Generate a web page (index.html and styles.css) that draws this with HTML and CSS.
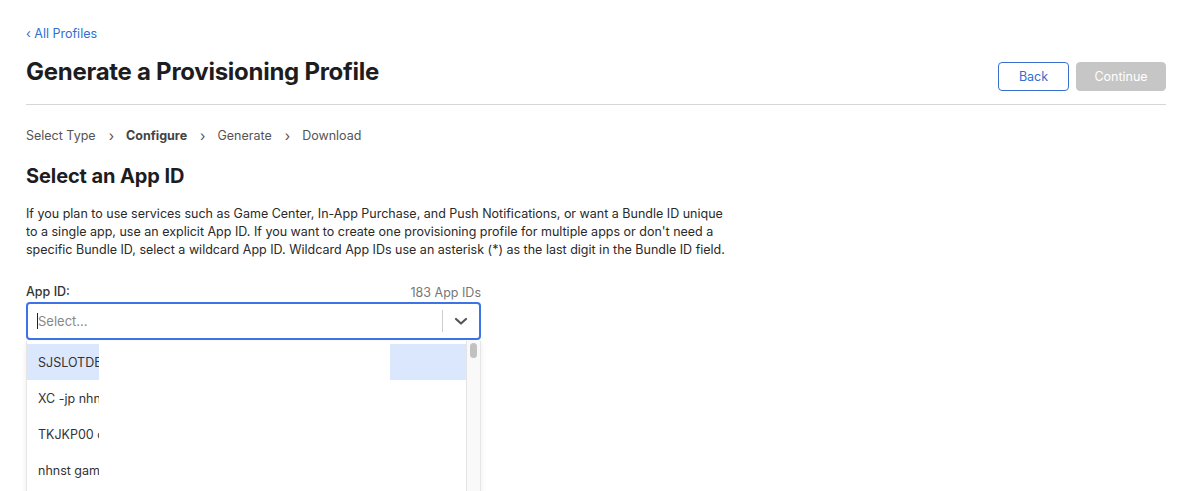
FILE: index.html
```html
<!DOCTYPE html>
<html>
<head>
<meta charset="utf-8">
<link rel="stylesheet" href="styles.css">
</head>
<body>
<div class="page">
  <a class="back-link" href="#">‹ All Profiles</a>
  <div class="header">
    <h1 class="title">Generate a Provisioning Profile</h1>
    <div class="actions">
      <button class="btn btn-back">Back</button>
      <button class="btn btn-continue">Continue</button>
    </div>
  </div>
  <nav class="steps">
    <span class="step">Select Type</span>
    <span class="sep">›</span>
    <span class="step current">Configure</span>
    <span class="sep">›</span>
    <span class="step">Generate</span>
    <span class="sep">›</span>
    <span class="step">Download</span>
  </nav>
  <h2 class="section-title">Select an App ID</h2>
  <p class="desc">If you plan to use services such as Game Center, In-App Purchase, and Push Notifications, or want a Bundle ID unique to a single app, use an explicit App ID. If you want to create one provisioning profile for multiple apps or don't need a specific Bundle ID, select a wildcard App ID. Wildcard App IDs use an asterisk (*) as the last digit in the Bundle ID field.</p>
  <div class="field">
    <div class="field-head">
      <label class="label">App ID:</label>
      <span class="count">183 App IDs</span>
    </div>
    <div class="select">
      <div class="select-input"><span class="caret"></span><span class="placeholder">Select...</span></div>
      <div class="select-divider"></div>
      <div class="select-arrow">
        <svg width="14" height="9" viewBox="0 0 14 9"><path d="M2 2 L7 6.5 L12 2" fill="none" stroke="#555" stroke-width="2.2" stroke-linecap="round" stroke-linejoin="round"/></svg>
      </div>
    </div>
    <div class="menu">
      <div class="options">
        <div class="option active"><span class="opt-seg opt-text">SJSLOTDEV</span><span class="opt-gap"></span><span class="opt-seg opt-tail"></span></div>
        <div class="option"><span class="opt-text">XC -jp nhn</span></div>
        <div class="option"><span class="opt-text">TKJKP00 com</span></div>
        <div class="option"><span class="opt-text">nhnst game</span></div>
      </div>
      <div class="scrollbar"><div class="thumb"></div></div>
    </div>
  </div>
</div>
</body>
</html>
```
FILE: styles.css
```css
* { box-sizing: border-box; }
html, body { margin: 0; padding: 0; background: #fff; }
body { font-family: Inter, "Helvetica Neue", Arial, sans-serif; color: #1d1d1f; overflow: hidden; height: 491px; }
.page { padding: 26px 15px 0 26px; }
.back-link { display: block; width: max-content; color: #2f6fd1; text-decoration: none; font-size: 12.5px; line-height: 16px; }
.header { display: flex; align-items: flex-start; justify-content: space-between; margin-top: 15px; padding-bottom: 13px; border-bottom: 1px solid #d6d6d6; }
.title { margin: 0; font-size: 24px; font-weight: 700; line-height: 30px; letter-spacing: -0.27px; color: #1d1d1f; }
.actions { display: flex; gap: 7px; margin-top: 5px; }
.btn { font-family: inherit; font-size: 12.5px; height: 29px; border-radius: 4px; cursor: pointer; }
.btn-back { width: 71px; background: #fff; color: #2f6fd1; border: 1px solid #3a6fcf; }
.btn-continue { width: 90px; background: #c6c6c6; color: #fff; border: 1px solid #c6c6c6; }
.steps { display: flex; align-items: center; margin-top: 23px; font-size: 12.5px; line-height: 16px; color: #555; }
.step.current { font-weight: 700; color: #444; }
.sep { margin: 0 12px 0 13px; font-size: 14px; color: #555; }
.section-title { margin: 20px 0 0; font-size: 20px; font-weight: 700; line-height: 24px; letter-spacing: -0.1px; color: #1d1d1f; }
.desc { margin: 17px 0 0; width: 706px; font-size: 12.5px; line-height: 18px; color: #2a2a2a; }
.field { width: 455px; margin-top: 25px; }
.field-head { display: flex; justify-content: space-between; align-items: baseline; font-size: 12.5px; line-height: 16px; }
.label { font-weight: 500; color: #333; }
.count { color: #777; position: relative; top: 1px; }
.select { display: flex; align-items: center; height: 38px; margin-top: 2px; border: 2px solid #3d73e6; border-radius: 4px; background: #fff; }
.select-input { flex: 1; display: flex; align-items: center; padding-left: 9px; font-size: 13px; color: #888; }
.caret { width: 1px; height: 16px; background: #222; }
.select-divider { width: 1px; height: 22px; background: #ccc; }
.select-arrow { width: 36px; display: flex; justify-content: center; align-items: center; }
.menu { display: flex; height: 160px; margin-top: 1px; border-left: 1px solid #e6e6e6; border-right: 1px solid #e6e6e6; box-shadow: 0 2px 6px rgba(0,0,0,0.08); background: #fff; }
.options { flex: 1; padding-top: 3px; }
.option { height: 36px; display: flex; align-items: center; font-size: 12.5px; color: #333; }
.opt-text { width: 72px; padding-left: 11px; overflow: hidden; white-space: nowrap; }
.option.active .opt-seg { background: #dbe7fd; height: 36px; display: flex; align-items: center; }
.opt-gap { width: 291px; height: 36px; background: #fff; }
.opt-tail { flex: 1; }
.scrollbar { width: 14px; background: #f9f9f9; border-left: 1px solid #e4e4e4; padding: 2px 3px 0; }
.thumb { width: 7px; height: 15px; border-radius: 4px; background: #c1c1c1; }
```
